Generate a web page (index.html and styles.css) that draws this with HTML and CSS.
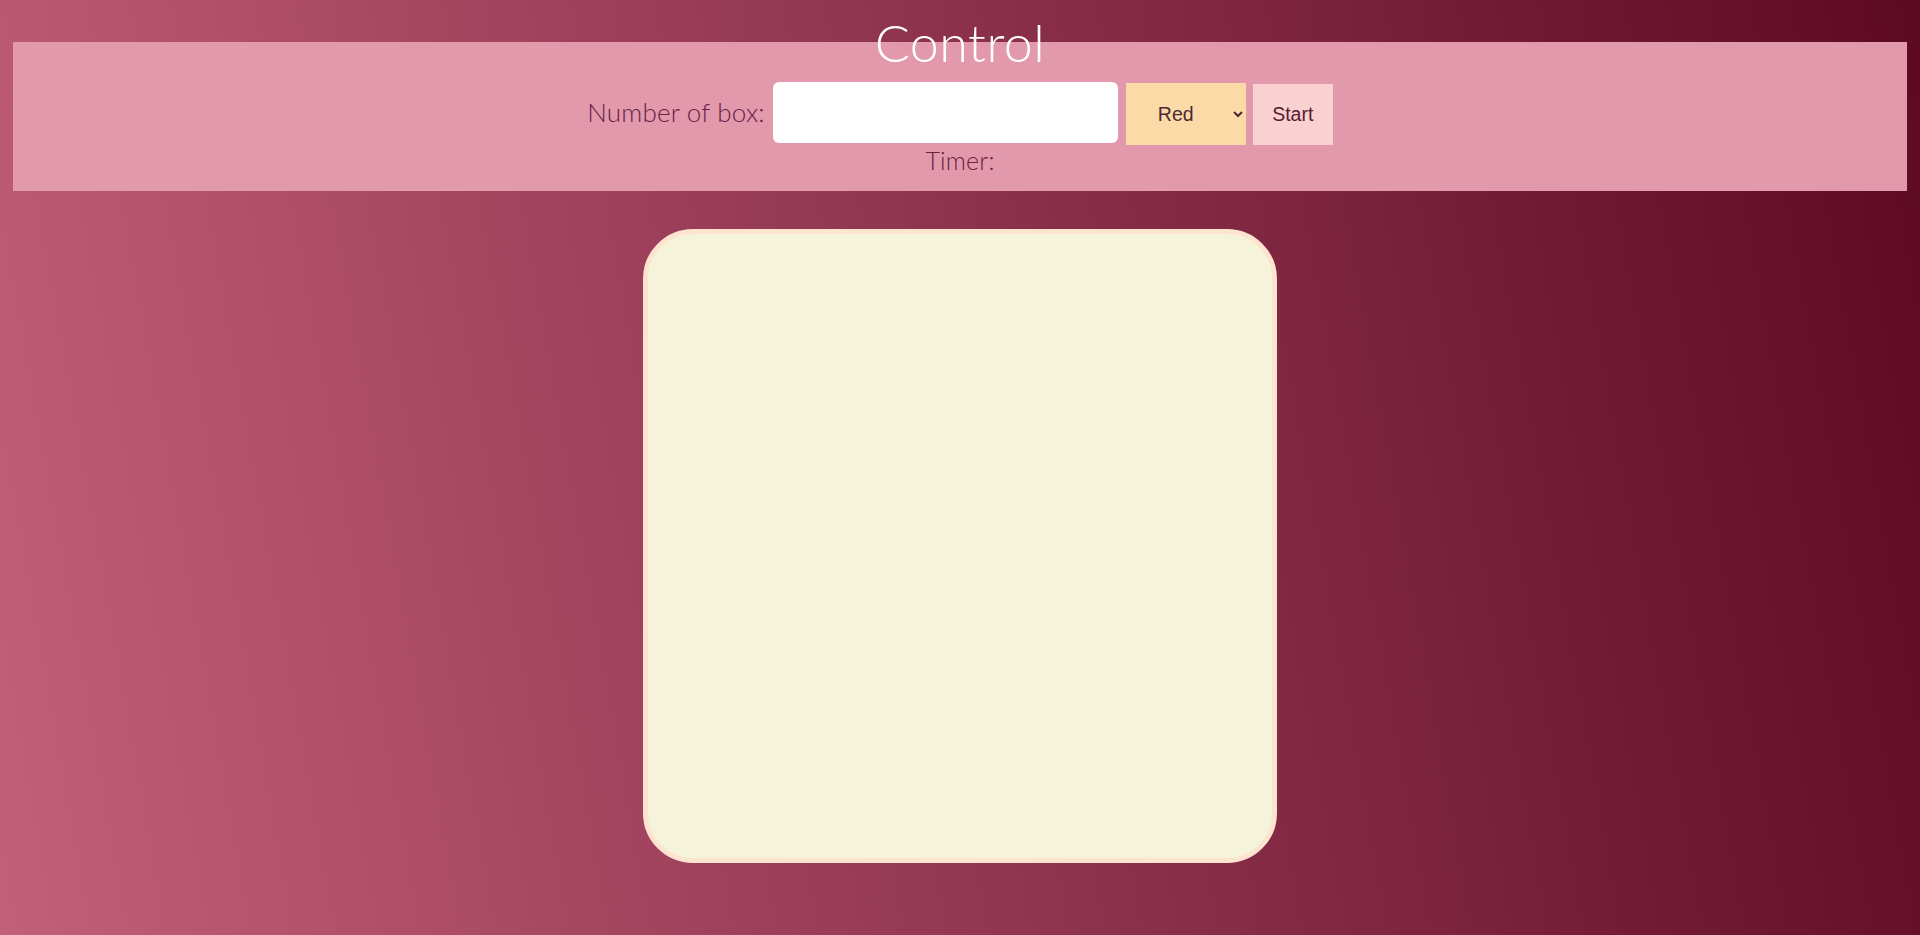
FILE: index.html
```html
<!DOCTYPE html>
<html lang="en">
<head>
<meta charset="utf-8">
<title>Control</title>
<link rel="stylesheet" href="styles.css">
</head>
<body>
  <h1 class="title">Control</h1>
  <section class="panel">
    <div class="row">
      <label class="label" for="count">Number of box:</label>
      <input class="count" id="count" type="text">
      <select class="color">
        <option>Red</option>
        <option>Green</option>
        <option>Blue</option>
      </select>
      <button class="start" type="button">Start</button>
    </div>
    <div class="timer">Timer:</div>
  </section>
  <div class="board"></div>
</body>
</html>
```

FILE: styles.css
```css
html {
  height: 100%;
}
body {
  margin: 8px;
  min-height: calc(100% - 16px);
  background: linear-gradient(80deg, #c25f7a 0%, #5e0924 100%);
  font-family: Lato, "Open Sans", sans-serif;
  font-weight: 300;
}
.title {
  margin: 4px 0 -30px;
  text-align: center;
  color: #ffffff;
  font-size: 52px;
  line-height: 60px;
  font-weight: 300;
  letter-spacing: 0.5px;
}
.panel {
  margin: 0 5px;
  padding: 40px 0 16px;
  background: #e199ab;
}
.row {
  display: flex;
  justify-content: center;
  align-items: center;
  gap: 7px;
  height: 63px;
}
.label {
  color: #6a1e48;
  font-size: 26px;
  line-height: 30px;
  letter-spacing: 0.2px;
  margin-bottom: 4px;
  margin-right: 1px;
}
.count {
  width: 345px;
  height: 61px;
  box-sizing: border-box;
  border: none;
  border-radius: 6px;
  background: #ffffff;
  margin-bottom: 2px;
  margin-right: 1px;
  outline: none;
}
.color {
  width: 120px;
  height: 62px;
  border: none;
  border-radius: 0;
  background-color: #fbdaa8;
  color: #4a2a30;
  font-family: "Liberation Sans", Arial, sans-serif;
  font-size: 19.5px;
  text-align-last: center;
  padding: 0 8px 0 0;
}
.start {
  width: 80px;
  height: 61px;
  border: none;
  background: #f9d1d1;
  color: #5a1a30;
  font-family: "Liberation Sans", Arial, sans-serif;
  font-size: 19.5px;
  padding: 0;
  margin-top: 1px;
}
.timer {
  text-align: center;
  color: #6b2240;
  font-size: 25px;
  line-height: 30px;
  letter-spacing: 0.2px;
}
.board {
  width: 624px;
  height: 624px;
  margin: 38px auto 0;
  border: 5px solid #fde4ce;
  border-radius: 50px;
  background: #f5f4db;
}
```
